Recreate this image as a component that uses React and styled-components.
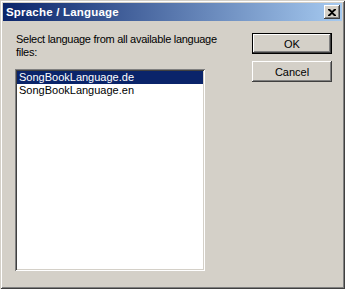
import React, { useState } from "react";
import styled, { createGlobalStyle } from "styled-components";

const Global = createGlobalStyle`
  html, body { margin: 0; padding: 0; background: #D4D0C8; }
  * { box-sizing: border-box; }
`;

const Window = styled.div`
  width: 345px;
  height: 289px;
  background: #D4D0C8;
  padding: 3px;
  display: flex;
  flex-direction: column;
  font-family: "Liberation Sans", Arial, sans-serif;
  font-size: 11px;
  box-shadow: inset 1px 1px 0 #D4D0C8, inset -1px -1px 0 #404040,
    inset 2px 2px 0 #FFFFFF, inset -2px -2px 0 #808080;
`;

const TitleBar = styled.div`
  height: 18px;
  display: flex;
  align-items: center;
  justify-content: space-between;
  padding: 0 2px 0 3px;
  background: linear-gradient(to right, #0A246A, #A6CAF0);
`;

const Title = styled.span`
  color: #fff;
  font-weight: bold;
  font-size: 11.5px;
  font-family: "Liberation Sans", Arial, sans-serif;
  letter-spacing: 0.2px;
`;

const CloseButton = styled.div`
  width: 16px;
  height: 14px;
  background: #D4D0C8;
  display: flex;
  align-items: center;
  justify-content: center;
  box-shadow: inset -1px -1px 0 #404040, inset 1px 1px 0 #FFFFFF,
    inset -2px -2px 0 #808080;
`;

const Client = styled.div`
  flex: 1;
  display: flex;
  padding: 12px 0 0 12px;
  gap: 47px;
`;

const LeftColumn = styled.div`
  display: flex;
  flex-direction: column;
  width: 190px;
`;

const Label = styled.div`
  line-height: 13px;
  color: #000;
  white-space: nowrap;
  padding-left: 1px;
  letter-spacing: -0.28px;
  margin-bottom: 10px;
`;

const ListBox = styled.div`
  width: 190px;
  height: 202px;
  background: #fff;
  padding: 2px;
  box-shadow: inset 1px 1px 0 #808080, inset -1px -1px 0 #FFFFFF,
    inset 2px 2px 0 #404040, inset -2px -2px 0 #D4D0C8;
`;

const Item = styled.div`
  height: 13px;
  line-height: 13px;
  padding-left: 2px;
  color: ${(p) => (p.$selected ? "#fff" : "#000")};
  background: ${(p) => (p.$selected ? "#0A246A" : "transparent")};
  white-space: nowrap;
`;

const ButtonColumn = styled.div`
  display: flex;
  flex-direction: column;
  gap: 7px;
`;

const Button = styled.div`
  width: 80px;
  height: 21px;
  display: flex;
  align-items: center;
  justify-content: center;
  color: #000;
  background: #D4D0C8;
  box-shadow: ${(p) =>
    p.$default
      ? "inset 0 0 0 1px #000, inset -2px -2px 0 #404040, inset 2px 2px 0 #FFFFFF, inset -3px -3px 0 #808080"
      : "inset -1px -1px 0 #404040, inset 1px 1px 0 #FFFFFF, inset -2px -2px 0 #808080"};
`;

export default function App() {
  const [selected, setSelected] = useState(0);
  const items = ["SongBookLanguage.de", "SongBookLanguage.en"];
  return (
    <>
      <Global />
      <Window>
        <TitleBar>
          <Title>Sprache / Language</Title>
          <CloseButton>
            <svg width="8" height="7" viewBox="0 0 8 7">
              <path d="M0 0h2l2 2 2-2h2v1L5 3.5 8 6v1H6L4 5 2 7H0V6l3-2.5L0 1z" fill="#000" />
            </svg>
          </CloseButton>
        </TitleBar>
        <Client>
          <LeftColumn>
            <Label>
              Select language from all available language
              <br />
              files:
            </Label>
            <ListBox>
              {items.map((it, i) => (
                <Item key={it} $selected={i === selected} onClick={() => setSelected(i)}>
                  {it}
                </Item>
              ))}
            </ListBox>
          </LeftColumn>
          <ButtonColumn>
            <Button $default>OK</Button>
            <Button>Cancel</Button>
          </ButtonColumn>
        </Client>
      </Window>
    </>
  );
}
